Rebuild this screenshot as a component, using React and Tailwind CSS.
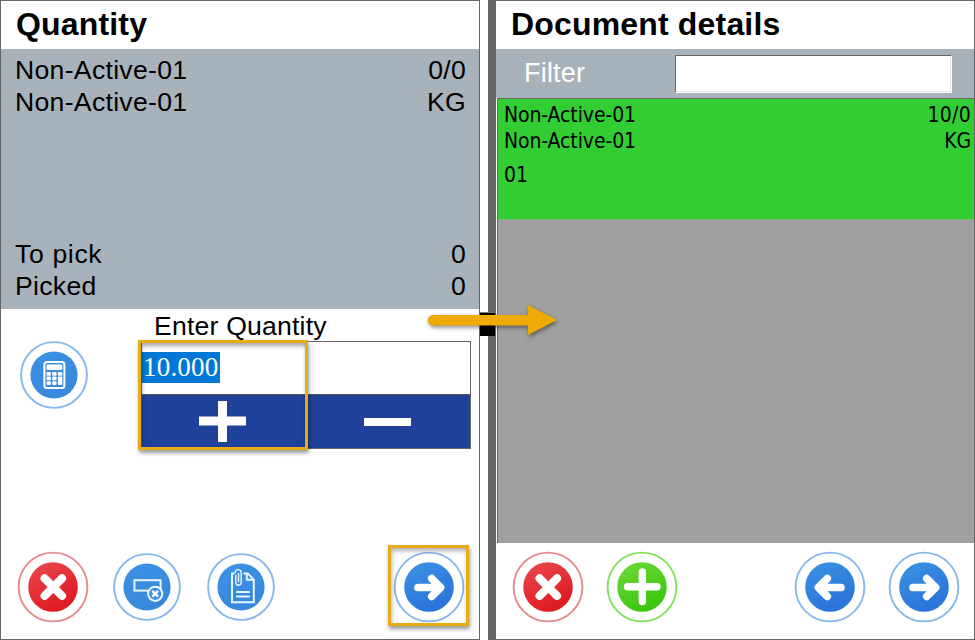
import React from "react";

const sans = "font-['Liberation_Sans',Arial,sans-serif]";

function Round({ id, ring, from, to, small, children }) {
  return (
    <svg width="72" height="72" viewBox="-36 -36 72 72" className="block shrink-0">
      <defs>
        <linearGradient id={id} x1="0" y1="0" x2="0.5" y2="1">
          <stop offset="0" stopColor={from} />
          <stop offset="1" stopColor={to} />
        </linearGradient>
      </defs>
      <circle r={small ? 32.9 : 34.4} fill="#fff" stroke={ring} strokeWidth="1.9" />
      <circle r={small ? 23.6 : 24.8} fill={`url(#${id})`} />
      {children}
    </svg>
  );
}

const blue = { ring: "#88b8ec", from: "#3b93e3", to: "#2a74da" };
const flat = { ring: "#88b8ec", from: "#3b92e4", to: "#3888dc" };
const red = { ring: "#e68a90", from: "#ea4a50", to: "#df1a22" };

function Cancel({ id }) {
  return (
    <Round id={id} {...red}>
      <path d="M-8.4 -8.6L9 8.8M9 -8.6L-8.4 8.8" stroke="#fff" strokeWidth="8.2" strokeLinecap="round" />
    </Round>
  );
}

function Arrow({ id, back }) {
  return (
    <Round id={id} {...blue}>
      <g transform={back ? "scale(-1 1)" : undefined}>
        <path
          d="M-11 0.5H10M2.8 -8.4L11.6 0.5L2.8 9.4"
          fill="none"
          stroke="#fff"
          strokeWidth="7.7"
          strokeLinecap="round"
          strokeLinejoin="round"
        />
      </g>
    </Round>
  );
}

function Calculator() {
  return (
    <Round id="calc" {...flat} small>
      <rect x="-9.6" y="-13" width="20" height="26" rx="2.6" fill="none" stroke="#fff" strokeWidth="2" />
      <rect x="-7.5" y="-10.6" width="15.8" height="5.6" rx="1.3" fill="#fff" />
      <g fill="#fff">
        {[-3, 1.6, 6.2].map((y) => (
          <g key={y}>
            <rect x="-7.5" y={y} width="4.4" height="3.7" rx="0.8" />
            <rect x="-1.8" y={y} width="4.4" height="3.7" rx="0.8" />
          </g>
        ))}
        <rect x="3.9" y="-3" width="4.4" height="3.7" rx="0.8" />
        <rect x="3.9" y="1.6" width="4.4" height="8.3" rx="0.8" />
      </g>
    </Round>
  );
}

function ClearField() {
  return (
    <Round id="clear" {...flat} small>
      <rect x="-12.6" y="-6.8" width="26.2" height="10.4" fill="none" stroke="#eaf4ff" strokeWidth="2" />
      <circle cx="8.2" cy="6.8" r="7.1" fill="#3a8fe1" stroke="#eaf4ff" strokeWidth="2" />
      <path d="M5.3 3.9L11.1 9.7M11.1 3.9L5.3 9.7" stroke="#fff" strokeWidth="2.4" />
    </Round>
  );
}

function Attachment() {
  return (
    <Round id="attach" {...flat} small>
      <g fill="none" stroke="#eaf4ff" strokeWidth="2">
        <path d="M-6.4 -13.4H-9V15.2H12.8V-7.4L6.8 -13.6H2.4" />
        <path d="M5.8 -13.6V-7.2H12.6" />
        <path d="M-4.8 5H8.8M-4.8 9.6H8.8" />
        <path
          d="M-5.2 -11.5V-4.4A2.7 2.7 0 0 0 0.2 -4.4V-14.4A2.9 2.9 0 0 0 -5.8 -14.4M-2.5 -13.4V-5.4"
          strokeWidth="1.4"
          strokeLinecap="round"
        />
      </g>
    </Round>
  );
}

function Add() {
  return (
    <Round id="add" ring="#83e25a" from="#6fda3c" to="#3cc60e">
      <path d="M0.3 -15V14.5M-14.5 -0.3H15" stroke="#fff" strokeWidth="7.4" strokeLinecap="round" />
    </Round>
  );
}

function Pair({ left, right }) {
  return (
    <div className="flex justify-between">
      <span>{left}</span>
      <span>{right}</span>
    </div>
  );
}

function QuantityPanel() {
  return (
    <section className="flex h-full w-[480px] flex-col border border-[#666] bg-white">
      <h1 className="h-12 pl-[15px] text-[32px] leading-[46px] font-bold tracking-[0.17px]">Quantity</h1>
      <div className="flex h-[260px] flex-col justify-between bg-[#a8b2ba] pt-[5px] pr-[13px] pb-[7px] pl-[14px] text-[26.6px] leading-8 tracking-[0.3px]">
        <div>
          <Pair left="Non-Active-01" right="0/0" />
          <Pair left="Non-Active-01" right="KG" />
        </div>
        <div>
          <Pair left={<span className="tracking-[0.65px]">To pick</span>} right="0" />
          <Pair left="Picked" right="0" />
        </div>
      </div>
      <div className="flex flex-1">
        <div className="w-[139px] pt-[30px] pl-[16.5px]">
          <Calculator />
        </div>
        <div className="w-[331px]">
          <div className="h-8 pt-px pl-[14px] text-[26.6px] leading-8 tracking-[0.2px]">Enter Quantity</div>
          <div className="relative ml-px h-[108px] w-[330px] border border-[#666]">
            <div className="flex h-[52px] items-center">
              <span className="-mt-px h-[31px] w-[78px] border-r border-[#8a5a28] bg-[#0078d7] pl-px font-['Liberation_Serif','Times_New_Roman',serif] text-[27px] leading-[31px] tracking-[0.2px] text-white">
                10.000
              </span>
            </div>
            <div className="flex h-[54px] border-t border-[#555] bg-[#20419a]">
              <div className="flex w-[161px] items-center justify-center">
                <svg width="47" height="41" className="block">
                  <path d="M0 20H47M23.5 0V41" stroke="#fff" strokeWidth="9" />
                </svg>
              </div>
              <div className="flex flex-1 items-center justify-center pl-px">
                <div className="h-2 w-[47px] bg-white" />
              </div>
            </div>
            <div className="absolute -top-[2px] -left-[4px] h-[110px] w-[170px] border-3 border-[#e8ab18] shadow-[1px_3px_4px_rgba(0,0,0,0.4),inset_1px_3px_4px_rgba(0,0,0,0.35)]" />
          </div>
        </div>
      </div>
      <div className="relative flex h-[88px] pl-[5px]">
        <div className="flex w-[94px] justify-center"><Cancel id="cancelLeft" /></div>
        <div className="flex w-[94px] justify-center"><ClearField /></div>
        <div className="flex w-[94px] justify-center"><Attachment /></div>
        <div className="w-[94px]" />
        <div className="flex w-[94px] justify-center"><Arrow id="nextLeft" /></div>
        <div className="absolute -top-[6px] left-[387px] h-[81px] w-[81px] border-3 border-[#e8ab18] shadow-[1px_3px_4px_rgba(0,0,0,0.4),inset_1px_3px_4px_rgba(0,0,0,0.3)]" />
      </div>
    </section>
  );
}

function DetailsPanel() {
  return (
    <section className="flex h-full w-[487px] flex-col border-y border-r border-l-8 border-[#666] bg-white">
      <h1 className="h-12 pl-[15px] text-[32px] leading-[46px] font-bold tracking-[0.17px]">Document details</h1>
      <div className="flex h-[49px] items-center bg-[#a8b2ba]">
        <span className="-mt-[2px] w-[179px] pl-7 text-[27px] leading-8 tracking-[0.2px] text-white">Filter</span>
        <div className="h-[38px] w-[277px] border border-t-[#666] border-r-white border-b-white border-l-[#666] bg-white">
          <div className="h-full border-r border-b border-[#e3e3e3]" />
        </div>
      </div>
      <div className="ml-px flex-1 border-t border-l border-[#666] bg-[#a0a0a0]">
        <div className="h-[121px] border-b border-[#83b583] bg-[#32cd32] pt-[3px] pr-[3px] pl-[6px] font-['DejaVu_Sans_Condensed','DejaVu_Sans',sans-serif] text-[21px] leading-[26px] tracking-[-0.1px] [font-stretch:condensed]">
          <Pair left="Non-Active-01" right={<span className="tracking-[0.25px]">10/0</span>} />
          <Pair left="Non-Active-01" right="KG" />
          <div className="mt-2">01</div>
        </div>
      </div>
      <div className="flex h-24 pt-2 pl-[5px]">
        <div className="flex w-[94px] justify-center"><Cancel id="cancelRight" /></div>
        <div className="flex w-[94px] justify-center"><Add /></div>
        <div className="w-[94px]" />
        <div className="flex w-[94px] justify-center"><Arrow id="back" back /></div>
        <div className="flex w-[94px] justify-center"><Arrow id="nextRight" /></div>
      </div>
    </section>
  );
}

export default function App() {
  return (
    <main className={`relative flex h-[640px] w-[975px] justify-between overflow-hidden bg-white text-black ${sans}`}>
      <QuantityPanel />
      <DetailsPanel />
      <svg className="absolute top-[296px] left-[420px]" width="150" height="50">
        <rect x="60" y="16" width="15" height="24" fill="#000" />
        <path d="M60 16.5H75" stroke="#777" />
        <g fill="#f0aa05" className="drop-shadow-[1px_2px_2px_rgba(0,0,0,0.45)]">
          <path d="M13 19H108V9L137 24L108 39V29.5H13A5.2 5.2 0 0 1 13 19Z" />
        </g>
      </svg>
    </main>
  );
}
